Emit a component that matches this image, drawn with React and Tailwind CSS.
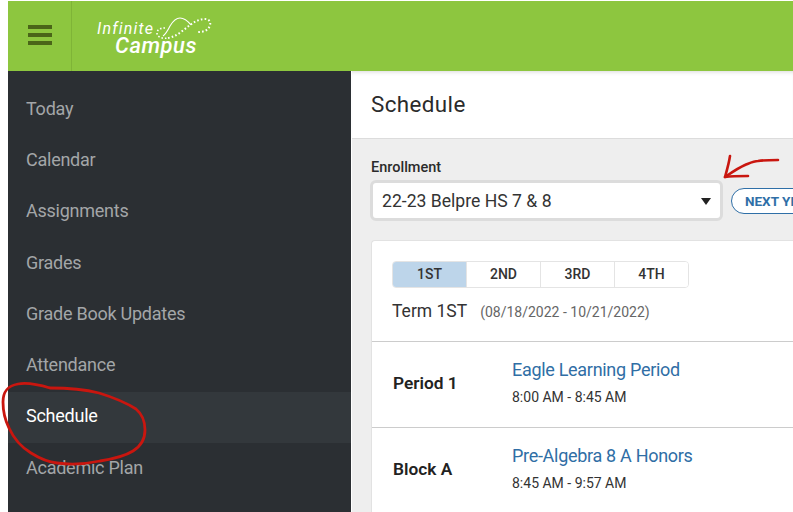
import React from "react";

const navItems = ["Today", "Calendar", "Assignments", "Grades", "Grade Book Updates", "Attendance", "Schedule", "Academic Plan"];
const terms = ["1ST", "2ND", "3RD", "4TH"];
const periods = [
  { name: "Period 1", course: "Eagle Learning Period", time: "8:00 AM - 8:45 AM" },
  { name: "Block A", course: "Pre-Algebra 8 A Honors", time: "8:45 AM - 9:57 AM" },
];

function Logo() {
  return (
    <div className="relative w-[116px] h-[44px] ml-[25px] text-white">
      <span className="absolute left-0 top-[8px] text-[16px] leading-[14px] italic tracking-[1.2px]">Infinite</span>
      <span className="absolute left-[18px] top-[22px] text-[22px] leading-[20px] italic font-medium tracking-[0.5px]">Campus</span>
      <svg className="absolute left-[58px] top-0" width="58" height="28" viewBox="0 0 58 28" fill="none" stroke="white">
        <path d="M10 14C5 14 2 16 2 19c0 4 5 6 11 5" strokeWidth="1.6" strokeDasharray="1.5 2" />
        <path d="M8 22c3-2 5-6 7-10 3-5 6-8 10-8 4 0 7 2 11 7" strokeWidth="1.1" />
        <path d="M13 24c5-1 9-3 13-6 8-6 15-13 24-13 4 0 6 3 5 6-1 5-6 7-12 7" strokeWidth="2" strokeDasharray="1.6 2.2" />
      </svg>
    </div>
  );
}

function Annotations() {
  return (
    <svg className="absolute left-0 top-0 pointer-events-none" width="793" height="512" fill="none" stroke="#c9160f" strokeLinecap="round" strokeLinejoin="round">
      <path d="M730 156c-1 7-3 14-5 21 6-4 13-9 20-12 5-2 9-4 13-4 7-1 14-1 20-1" strokeWidth="2.6" />
      <path d="M725 177c7-1 15-1 23-1" strokeWidth="2.6" />
      <path d="M50 388c-10-3-22-6-32-4C7 386 3 392 3 402c0 9 2 18 6 26 5 11 12 19 22 25 8 5 16 9 26 10 14 2 29 1 43-2 13-2 25-5 33-10 8-5 12-13 12-21 0-8-3-16-9-21-11-7-24-12-37-16-16-4-32-5-49-5" strokeWidth="2.8" />
    </svg>
  );
}

export default function App() {
  return (
    <div className="relative w-[793px] h-[512px] overflow-hidden bg-white pl-2 pt-px font-['Roboto',sans-serif]">
      <header className="h-[70px] bg-[#8dc63f] flex items-center">
        <div className="w-[64px] h-full border-r border-[#7fb437] flex items-center justify-center pb-[2px]">
          <div className="w-[24px] flex flex-col gap-[4px]">
            <div className="h-[4px] bg-[#4a6518]" />
            <div className="h-[4px] bg-[#4a6518]" />
            <div className="h-[4px] bg-[#4a6518]" />
          </div>
        </div>
        <Logo />
      </header>

      <div className="flex h-[441px]">
        <nav className="w-[343px] shrink-0 bg-[#2b2f33] pt-[13px]">
          {navItems.map((item) => (
            <div
              key={item}
              className={`h-[51.3px] flex items-center pl-[18px] pb-[3px] text-[18px] tracking-[-0.25px] ${item === "Schedule" ? "bg-[#33383c] text-white" : "text-[#a3a6a8]"}`}
            >
              {item}
            </div>
          ))}
        </nav>

        <main className="flex-1 min-w-0 bg-[#eeeeee] ml-px overflow-hidden">
          <div className="h-[68px] bg-white border-b border-[#dcdcdc] flex items-center pl-[19px] shadow-[inset_0_4px_4px_-3px_rgba(0,0,0,0.15)]">
            <h1 className="text-[22.4px] text-[#2b2b2b] tracking-[0.4px]">Schedule</h1>
          </div>

          <div className="pl-[19px] pt-[20px]">
            <div className="text-[14.5px] leading-[18px] font-medium text-[#2b2b2b]">Enrollment</div>
            <div className="flex items-center w-[460px] mt-[3px] -ml-px">
              <div className="w-[353px] h-[41px] shrink-0 bg-white border-[3px] border-[#dcdcdc] rounded-[6px] flex items-center justify-between pl-[9px] pr-[9px] pt-px text-[#333333] text-[17.6px]">
                <span>22-23 Belpre HS 7 &amp; 8</span>
                <span className="w-0 h-0 border-x-[5px] border-x-transparent border-t-[7px] border-t-[#222222]" />
              </div>
              <div className="ml-[8px] h-[26px] w-[100px] shrink-0 border border-[#2f6fa7] rounded-full bg-white pl-[13px] text-[13.5px] leading-[24px] font-bold text-[#2f6fa7] whitespace-nowrap overflow-hidden">
                NEXT YEAR
              </div>
            </div>

            <section className="mt-[19px] w-[440px] bg-white border border-[#e2e2e2] rounded-tl-[4px] border-r-0">
              <div className="pl-[20px] pt-[20px] pb-[18px]">
                <div className="flex w-[297px] h-[27px] border border-[#e4e4e4] rounded-[4px] overflow-hidden text-[14px] font-medium text-[#333333]">
                  {terms.map((term, i) => (
                    <div
                      key={term}
                      className={`flex-1 flex items-center justify-center ${i > 0 ? "border-l border-[#e4e4e4]" : ""} ${i === 0 ? "bg-[#bdd5ea]" : "bg-white"}`}
                    >
                      {term}
                    </div>
                  ))}
                </div>
                <div className="flex items-baseline mt-[11px]">
                  <span className="text-[17.5px] leading-[24px] text-[#333333]">Term 1ST</span>
                  <span className="ml-[13px] text-[14px] text-[#666666]">(08/18/2022 - 10/21/2022)</span>
                </div>
              </div>

              {periods.map((p) => (
                <div key={p.name} className="h-[86px] border-t border-[#cccccc] flex items-center pl-[21px] pb-[2px]">
                  <div className="w-[120px] text-[17.3px] font-semibold text-[#222222]">{p.name}</div>
                  <div className="mb-[2px] -ml-px">
                    <div className="text-[18px] leading-[24px] tracking-[-0.3px] text-[#2f6ea5]">{p.course}</div>
                    <div className="mt-[5px] text-[14px] leading-[20px] text-[#333333]">{p.time}</div>
                  </div>
                </div>
              ))}
            </section>
          </div>
        </main>
      </div>

      <Annotations />
    </div>
  );
}
